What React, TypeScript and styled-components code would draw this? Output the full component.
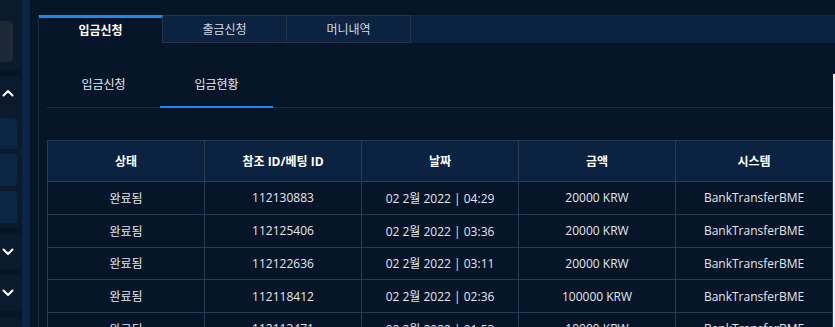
import styled, { createGlobalStyle } from 'styled-components'

const GlobalStyle = createGlobalStyle`
  html, body {
    margin: 0;
    padding: 0;
    background: #071528;
    overflow: hidden;
  }
  body {
    font-family: "Open Sans", "Noto Sans CJK KR", sans-serif;
    font-size: 12px;
    color: #e1e7ee;
  }
`

const Page = styled.div`
  display: flex;
  height: 327px;
  width: 835px;
  overflow: hidden;
  background: #071528;
`

const Sidebar = styled.div`
  display: flex;
  width: 30px;
  flex-shrink: 0;
  margin-right: 8px;
`

const SideCards = styled.div`
  width: 22px;
  display: flex;
  flex-direction: column;
  gap: 6px;
  margin-top: -20px;
`

const SideCard = styled.div<{ $h: number }>`
  height: ${(p) => p.$h}px;
  flex-shrink: 0;
  background: #0b1a2d;
  border-radius: 0 5px 5px 0;
  display: flex;
  flex-direction: column;
  align-items: flex-start;
  padding-right: 5px;
  box-sizing: border-box;
`

const GreyBox = styled.div`
  width: 13px;
  height: 41px;
  margin-top: 41px;
  background: #1d2836;
  border-radius: 0 4px 4px 0;
`

const Chevron = styled.div`
  width: 16px;
  height: 16px;
  display: flex;
  align-items: center;
  justify-content: center;
`

const BlueBox = styled.div<{ $h: number }>`
  width: 17px;
  height: ${(p) => p.$h}px;
  background: #0b2645;
  border-radius: 0 3px 3px 0;
`

const BlueStack = styled.div`
  display: flex;
  flex-direction: column;
  gap: 5px;
  margin-top: 17px;
`

const Strip = styled.div`
  width: 8px;
  background: #0a2545;
`

const Panel = styled.div`
  flex: 1;
  margin-top: 15px;
  border-left: 1px solid #1c2c3f;
  display: flex;
  flex-direction: column;
  min-height: 0;
`

const TabBar = styled.div`
  display: flex;
  height: 28px;
  flex-shrink: 0;
`

const Tab = styled.div<{ $active?: boolean }>`
  width: ${(p) => (p.$active ? 124 : 124)}px;
  box-sizing: border-box;
  display: flex;
  align-items: center;
  justify-content: center;
  font-weight: ${(p) => (p.$active ? 700 : 400)};
  color: ${(p) => (p.$active ? '#ffffff' : '#d3dae3')};
  background: ${(p) => (p.$active ? '#071528' : '#0b2340')};
  border-top: ${(p) => (p.$active ? '3px solid #1a87ee' : '1px solid #22344a')};
  border-right: 1px solid #22344a;
  border-bottom: ${(p) => (p.$active ? 'none' : '1px solid #22344a')};
  padding-bottom: ${(p) => (p.$active ? 1 : 0)}px;
`

const TabFill = styled.div`
  flex: 1;
  background: #0b2340;
  border-top: 1px solid #17283c;
`

const Body = styled.div`
  flex: 1;
  display: flex;
  min-height: 0;
`

const Content = styled.div`
  flex: 1;
  padding: 22px 0 0 8px;
`

const ScrollEdge = styled.div`
  width: 2px;
  margin-top: 31px;
  background: #e9eef3;
`

const SubTabs = styled.div`
  display: flex;
  height: 42px;
  border-bottom: 1px solid #1c2b3d;
`

const SubTab = styled.div<{ $active?: boolean }>`
  width: 113px;
  box-sizing: border-box;
  display: flex;
  align-items: center;
  justify-content: center;
  color: #e4e9ef;
  padding-bottom: 4px;
  border-bottom: 2px solid ${(p) => (p.$active ? '#1a87ee' : 'transparent')};
  margin-bottom: -1px;
`

const Table = styled.table`
  margin-top: 32px;
  width: 786px;
  border-collapse: collapse;
  table-layout: fixed;
  border: 1px solid #2a3b50;
`

const Th = styled.th`
  height: 40px;
  background: #0b2340;
  color: #ffffff;
  font-weight: 700;
  border: 1px solid #2a3b50;
  text-align: center;
  padding: 0;
`

const Td = styled.td`
  height: 31.75px;
  background: #071528;
  color: #e1e7ee;
  border: 1px solid #2a3b50;
  text-align: center;
  padding: 0;
`

const ChevronIcon = ({ up }: { up?: boolean }) => (
  <svg width="12" height="8" viewBox="0 0 12 8">
    <path
      d={up ? 'M1.5 6.5 L6 2 L10.5 6.5' : 'M1.5 1.5 L6 6 L10.5 1.5'}
      fill="none"
      stroke="#ffffff"
      strokeWidth="2"
      strokeLinecap="round"
      strokeLinejoin="round"
    />
  </svg>
)

const rows = [
  ['완료됨', '112130883', '02 2월 2022 | 04:29', '20000 KRW', 'BankTransferBME'],
  ['완료됨', '112125406', '02 2월 2022 | 03:36', '20000 KRW', 'BankTransferBME'],
  ['완료됨', '112122636', '02 2월 2022 | 03:11', '20000 KRW', 'BankTransferBME'],
  ['완료됨', '112118412', '02 2월 2022 | 02:36', '100000 KRW', 'BankTransferBME'],
  ['완료됨', '112113471', '02 2월 2022 | 01:53', '10000 KRW', 'BankTransferBME'],
]

const headers = ['상태', '참조 ID/베팅 ID', '날짜', '금액', '시스템']

export default function App() {
  return (
    <>
      <GlobalStyle />
      <Page>
        <Sidebar>
          <SideCards>
            <SideCard $h={90}>
              <GreyBox />
            </SideCard>
            <SideCard $h={152} style={{ paddingTop: 9 }}>
              <Chevron>
                <ChevronIcon up />
              </Chevron>
              <BlueStack>
                <BlueBox $h={31} />
                <BlueBox $h={32} />
                <BlueBox $h={32} />
              </BlueStack>
            </SideCard>
            <SideCard $h={35} style={{ justifyContent: 'center' }}>
              <Chevron>
                <ChevronIcon />
              </Chevron>
            </SideCard>
            <SideCard $h={36} style={{ justifyContent: 'center' }}>
              <Chevron>
                <ChevronIcon />
              </Chevron>
            </SideCard>
            <SideCard $h={40} />
          </SideCards>
          <Strip />
        </Sidebar>
        <Panel>
          <TabBar>
            <Tab $active>입금신청</Tab>
            <Tab>출금신청</Tab>
            <Tab>머니내역</Tab>
            <TabFill />
          </TabBar>
          <Body>
            <Content>
              <SubTabs>
                <SubTab>입금신청</SubTab>
                <SubTab $active>입금현황</SubTab>
              </SubTabs>
              <Table>
                <thead>
                  <tr>
                    {headers.map((h) => (
                      <Th key={h}>{h}</Th>
                    ))}
                  </tr>
                </thead>
                <tbody>
                  {rows.map((r) => (
                    <tr key={r[1]}>
                      {r.map((c, i) => (
                        <Td key={i}>{c}</Td>
                      ))}
                    </tr>
                  ))}
                </tbody>
              </Table>
            </Content>
            <ScrollEdge />
          </Body>
        </Panel>
      </Page>
    </>
  )
}
